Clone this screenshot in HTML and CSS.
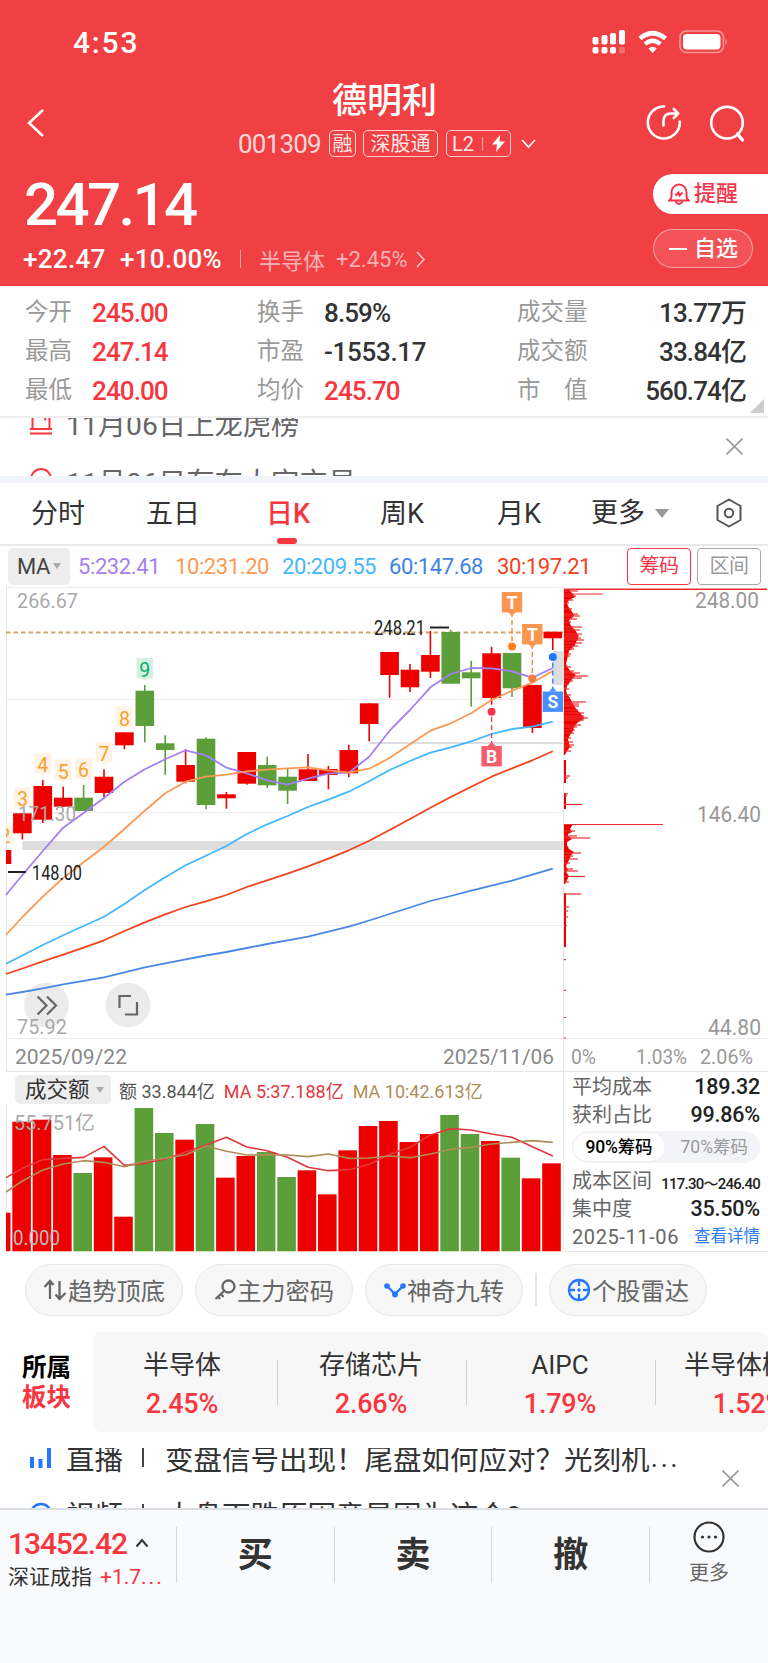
FILE: index.html
```html
<!DOCTYPE html>
<html lang="zh-CN">
<head>
  <meta charset="UTF-8" />
  <meta name="viewport" content="width=device-width, initial-scale=1.0"/>
  <title>德明利 001309</title>
  <link rel="stylesheet" href="styles.css">
</head>
<body>
  <header class="top">
    <div class="status">
      <span class="time">4:53</span>
      <svg width="134" height="26" viewBox="592 29 134 26" fill="#fff">
        <rect x="592.5" y="37" width="6" height="7.5" rx="2"/>
        <rect x="601.5" y="35" width="6" height="9.500" rx="2"/>
        <rect x="610" y="33" width="6" height="11.500" rx="2"/>
        <rect x="619" y="30" width="6" height="14.500" rx="2"/>
        <rect x="592.5" y="47" width="6" height="6.500" rx="2"/>
        <rect x="601.5" y="47" width="6" height="6.500" rx="2"/>
        <rect x="610" y="47" width="6" height="6.500" rx="2"/>
        <rect x="619" y="47" width="6" height="6.500" rx="2" opacity=".25"/>
        <path d="M640 38.500Q652.500 28 665.500 38.500" fill="none" stroke="#fff" stroke-width="4.600"/>
        <path d="M645 44Q652.500 37.500 660.500 44" fill="none" stroke="#fff" stroke-width="4.200"/>
        <path d="M648.500 48.500Q652.500 45.200 656.800 48.500L652.600 53Z"/>
        <rect x="680" y="31" width="43.500" height="21.500" rx="6.500" fill="none" stroke="#fff" stroke-opacity=".45" stroke-width="1.600"/>
        <rect x="683" y="34" width="37.500" height="15.500" rx="4"/>
        <path d="M725.500 38.500q2.500 3 0 7z" opacity=".5"/>
      </svg>
    </div>
    <div class="title-bar">
      <svg class="back" width="20" height="32" viewBox="0 0 20 32"><path d="M17 3L3 16L17 29"/></svg>
      <div class="title">
        <h1>德明利</h1>
        <div class="tags">
          <span class="code">001309</span>
          <span class="tag">融</span>
          <span class="tag wide">深股通</span>
          <span class="tag l2">L2<i></i><svg width="13" height="17" viewBox="0 0 13 17"><path d="M8 0L0 9.500H5L4 17L13 6.500H7.500Z" fill="#fff"/></svg></span>
          <svg class="down" width="15" height="10" viewBox="0 0 15 10"><path d="M1 1L7.500 8L14 1"/></svg>
        </div>
      </div>
      <svg class="tools" width="102" height="40" viewBox="645 103 102 40">
        <path d="M664 106.500A16 16 0 1 0 679.800 121.500"/>
        <path d="M663.500 125.500V121q0-7.500 7.500-7.500H676M673.800 109L678.200 113.500L673.800 118"/>
        <circle cx="727" cy="122.700" r="15.800"/>
        <path d="M737.500 134L742.500 140" stroke-width="3.400"/>
      </svg>
    </div>
    <div class="quote">
      <div class="quote-left">
        <div class="price">247.14</div>
        <div class="change">
          <b>+22.47</b><b>+10.00%</b><i></i><span>半导体</span><span class="pct">+2.45%</span>
          <svg width="9" height="17" viewBox="0 0 9 17"><path d="M1 1L8 8.500L1 16"/></svg>
        </div>
      </div>
      <div class="quote-right">
        <button class="remind">
          <svg width="22" height="23" viewBox="0 0 22 23"><path d="M1.200 17.500H20.800Q18.500 16 18.500 13V9.500A7.500 8 0 0 0 3.500 9.500V13Q3.500 16 1.200 17.500ZM7.500 18.500Q11 23.500 14.500 18.500M7.500 12.500L10.500 9.500L11.500 12.500L14.500 9.500"/></svg>提醒
        </button>
        <button class="fav"><i></i>自选</button>
      </div>
    </div>
  </header>

  <section class="stats">
    <span>今开</span><b class="red">245.00</b><span>换手</span><b>8.59%</b><span>成交量</span><b class="r">13.77万</b>
    <span>最高</span><b class="red">247.14</b><span>市盈</span><b class="pe">-1553.17</b><span>成交额</span><b class="r">33.84亿</b>
    <span>最低</span><b class="red">240.00</b><span>均价</span><b class="red">245.70</b><span>市　值</span><b class="r">560.74亿</b>
    <i class="corner"></i>
  </section>

  <section class="news">
    <div class="news-list">
      <p><svg width="24" height="26" viewBox="0 0 24 26"><path d="M3.500 20V11A8.500 9 0 0 1 20.500 11V20M1 20H23M1 24.500H23M13 6.500q3.500 1 3.500 5"/></svg>11月06日上龙虎榜</p>
      <p><svg width="24" height="26" viewBox="0 0 24 26"><circle cx="12" cy="12" r="10"/></svg>11月06日存在大宗交易</p>
    </div>
    <svg class="close" width="17" height="17" viewBox="0 0 17 17"><path d="M.5.5L16.500 16.500M16.500.5L.5 16.500"/></svg>
  </section>

  <nav class="tabs">
    <span>分时</span><span>五日</span><span class="on">日K</span><span>周K</span><span>月K</span>
    <span class="more">更多<i></i></span>
    <svg width="28" height="30" viewBox="0 0 28 30"><path d="M14 1.500L25.500 8V22L14 28.500L2.500 22V8Z"/><circle cx="14" cy="15" r="4.200"/></svg>
  </nav>

  <div class="ma-row">
    <span class="drop">MA<i></i></span>
    <span style="color:#a47ff0">5:232.41</span>
    <span style="color:#fb9a52">10:231.20</span>
    <span style="color:#43b7fb">20:209.55</span>
    <span style="color:#3f82e6">60:147.68</span>
    <span style="color:#f2421d">30:197.21</span>
    <em class="box on">筹码</em>
    <em class="box">区间</em>
  </div>

  <svg id="kline" width="768" height="485" viewBox="0 587 768 485"></svg>

  <section class="lower">
    <div class="volume">
      <div class="vol-head">
        <span class="drop">成交额<i></i></span>
        <span>额 33.844亿</span>
        <span class="m5">MA 5:37.188亿</span>
        <span class="m10">MA 10:42.613亿</span>
      </div>
      <svg id="vol" width="563" height="148" viewBox="0 1104 563 148"></svg>
    </div>
    <div class="chip">
      <div><span>平均成本</span><b>189.32</b></div>
      <div><span>获利占比</span><b>99.86%</b></div>
      <div class="switch"><b>90%筹码</b><span>70%筹码</span></div>
      <div><span>成本区间</span><b class="small">117.30～246.40</b></div>
      <div><span>集中度</span><b>35.50%</b></div>
      <div><span class="date">2025-11-06</span><a>查看详情</a></div>
    </div>
  </section>

  <div class="pills">
    <span><svg width="24" height="22" viewBox="0 0 24 22"><path d="M7 20V2M1.500 8L7 2L10.500 6M16.500 2V20M12.500 15.500L16.500 20L22.500 14"/></svg>趋势顶底</span>
    <span><svg width="22" height="22" viewBox="0 0 22 22"><circle cx="14.500" cy="7.500" r="6"/><path d="M10 12L1.500 20M7 15L9.500 18M4 17.500L6 20"/></svg>主力密码</span>
    <span><svg class="blue" width="22" height="22" viewBox="0 0 22 22"><path d="M3 7L11 15L19 7"/><g fill="#2677ff" stroke="none"><circle cx="3" cy="7" r="2.800"/><circle cx="11" cy="15.500" r="2.900"/><circle cx="19" cy="7" r="2.800"/></g></svg>神奇九转</span>
    <i></i>
    <span><svg class="blue" width="24" height="24" viewBox="0 0 24 24"><circle cx="12" cy="12" r="10"/><path d="M12 2V8M12 16V22M2 12H8M16 12H22"/><circle cx="12" cy="12" r="1.800" fill="#2677ff" stroke="none"/></svg>个股雷达</span>
  </div>

  <section class="sector">
    <div class="label">所属<br><em>板块</em></div>
    <div class="cells">
      <div>半导体<b>2.45%</b></div>
      <div>存储芯片<b>2.66%</b></div>
      <div>AIPC<b>1.79%</b></div>
      <div>半导体概念<b>1.52%</b></div>
    </div>
  </section>

  <section class="live">
    <div class="live-list">
      <p><svg width="24" height="22" viewBox="0 0 24 22"><path d="M3 9V20M11.500 11V20M20 0V20"/></svg><span>直播</span><i></i>变盘信号出现！尾盘如何应对？光刻机<em>...</em></p>
      <p><svg width="24" height="26" viewBox="0 0 24 26"><circle cx="12" cy="12" r="10"/></svg><span>视频</span><i></i>大盘下跌原因竟是因为这个?</p>
    </div>
    <svg class="close" width="17" height="17" viewBox="0 0 17 17"><path d="M.5.5L16.500 16.500M16.500.5L.5 16.500"/></svg>
  </section>

  <footer class="trade">
    <div class="index">
      <div class="num">13452.42<svg width="14" height="10" viewBox="0 0 14 10"><path d="M1.500 8.500L7 2L12.500 8.500"/></svg></div>
      <div class="name">深证成指<em>+1.7<i>...</i></em></div>
    </div>
    <b>买</b><b>卖</b><b>撤</b>
    <div class="etc">
      <svg width="34" height="34" viewBox="0 0 34 34"><circle cx="17" cy="17" r="14.500"/><g fill="#333" stroke="none"><circle cx="10.500" cy="17" r="1.600"/><circle cx="17" cy="17" r="1.600"/><circle cx="23.500" cy="17" r="1.600"/></g></svg>
      更多
    </div>
  </footer>

  <script src="chart.js"></script>
</body>
</html>
```

FILE: styles.css
```css
* {
  box-sizing: border-box;
}
body {
  margin: 0;
  width: 768px;
  height: 1663px;
  overflow: hidden;
  background: #fff;
  color: #333;
  font-family: Roboto, "Noto Sans CJK SC", sans-serif;
}
svg {
  display: block;
  flex: none;
}
b {
  font-weight: 500;
}
em, i {
  font-style: normal;
}
p, h1 {
  margin: 0;
}

/* header */
.top {
  height: 286px;
  background: #f04043;
  color: #fff;
}
.status {
  display: flex;
  height: 76px;
  padding: 29px 42px 0 73px;
  justify-content: space-between;
}
.time {
  font-size: 30px;
  font-weight: 500;
  line-height: 28px;
  letter-spacing: 1.8px;
}
.status svg {
  overflow: visible;
}
.title-bar {
  display: flex;
  height: 90px;
}
.back {
  margin: 31px 0 0 26px;
  fill: none;
  stroke: #fff;
  stroke-width: 2.6;
}
.title {
  width: 480px;
  margin-left: 105px;
}
.title h1 {
  padding: 1px 0 0 181px;
  font-size: 35px;
  font-weight: 500;
  line-height: 50px;
}
.tags {
  display: flex;
  align-items: center;
  margin-top: 3px;
  padding-left: 87px;
  height: 27px;
}
.code {
  width: 91px;
  font-size: 26px;
  letter-spacing: -.8px;
  color: rgba(255, 255, 255, .8);
}
.tag {
  display: flex;
  align-items: center;
  justify-content: center;
  width: 27px;
  height: 27px;
  margin-right: 7px;
  border: 1.5px solid rgba(255, 255, 255, .75);
  border-radius: 5px;
  font-size: 20px;
  line-height: 24px;
  color: rgba(255, 255, 255, .9);
}
.tag.wide {
  width: 75px;
  margin-right: 8px;
}
.tag.l2 {
  width: 65px;
  margin-right: 10px;
}
.tag.l2 i {
  width: 1px;
  height: 14px;
  margin: 0 9px 0 8px;
  background: rgba(255, 255, 255, .6);
}
.down {
  fill: none;
  stroke: #fff;
  stroke-width: 1.6;
}
.tools {
  margin: 27px 0 0 14px;
  fill: none;
  stroke: #fff;
  stroke-width: 2.6;
  stroke-linecap: round;
  stroke-linejoin: round;
}
.quote {
  display: flex;
  justify-content: space-between;
}
.price {
  padding-left: 24px;
  margin-top: 7px;
  font-size: 60px;
  font-weight: 500;
  letter-spacing: -2.6px;
  line-height: 64px;
}
.change {
  display: flex;
  align-items: center;
  height: 44px;
  padding-left: 23px;
  font-size: 26px;
}
.change b {
  width: 97px;
  letter-spacing: .3px;
}
.change b + b {
  width: 119px;
}
.change i {
  width: 1px;
  height: 18px;
  margin: 0 18px 0 1px;
  background: rgba(255, 255, 255, .5);
}
.change span {
  width: 77px;
  font-size: 22px;
  color: rgba(255, 255, 255, .6);
}
.change .pct {
  width: 80px;
}
.change svg {
  fill: none;
  stroke: rgba(255, 255, 255, .7);
  stroke-width: 1.5;
}
.quote-right {
  width: 115px;
  padding-top: 8px;
}
.remind, .fav {
  display: flex;
  align-items: center;
  border: 0;
  padding: 0 0 0 15px;
  font: 500 22px/32px Roboto, "Noto Sans CJK SC", sans-serif;
}
.remind {
  width: 115px;
  height: 40px;
  border-radius: 20px 0 0 20px;
  background: #fff;
  color: #f5354a;
}
.remind svg {
  margin-right: 4px;
  fill: none;
  stroke: #f5354a;
  stroke-width: 2;
}
.fav {
  width: 100px;
  height: 39px;
  margin-top: 15px;
  border: 1.5px solid rgba(255, 255, 255, .45);
  border-radius: 20px;
  background: rgba(255, 255, 255, .1);
  color: #fff;
}
.fav i {
  width: 18px;
  height: 2px;
  margin-right: 7px;
  background: #fff;
}

/* stats */
.stats {
  position: relative;
  display: grid;
  grid-template-columns: 67px 165px 67px 193px 78px 151px;
  grid-auto-rows: 39px;
  height: 132px;
  padding: 8px 0 0 25px;
  border-bottom: 2px solid #eee;
  line-height: 39px;
}
.stats span {
  font-size: 23.5px;
  line-height: 36px;
  color: #999;
}
.stats b {
  font-size: 26px;
  letter-spacing: -.9px;
}
.stats .pe {
  letter-spacing: -.3px;
}
.stats .r {
  text-align: right;
}
.red {
  color: #f8363f;
}
.corner {
  position: absolute;
  right: 4px;
  bottom: 3px;
  border-left: 14px solid transparent;
  border-bottom: 14px solid #ccc;
}

/* news */
.news {
  display: flex;
  height: 65px;
  border-bottom: 7px solid #f1f4fa;
}
.news-list {
  flex: 1;
  height: 58px;
  overflow: hidden;
}
.news p {
  display: flex;
  align-items: center;
  height: 58px;
  margin-top: -25px;
  padding-left: 29px;
  font-size: 28.3px;
  color: #666;
}
.news p + p {
  margin-top: 0;
}
.news p svg {
  margin-right: 13px;
  fill: none;
  stroke: #f8363f;
  stroke-width: 2;
}
.close {
  margin: 20px 25px 0 0;
  stroke: #999;
  stroke-width: 1.6;
}

/* tabs */
.tabs {
  display: flex;
  height: 63px;
  padding-left: 31px;
  border-bottom: 2px solid #e9e9e9;
  font-size: 27px;
  line-height: 63px;
  color: #333;
}
.tabs span {
  width: 115px;
}
.tabs span.on {
  position: relative;
  width: 113px;
  padding-left: 5px;
  font-weight: 500;
  color: #f8363f;
}
.tabs span.on + span {
  width: 117px;
  padding-left: 6px;
}
.tabs span:nth-child(5) {
  width: 100px;
  padding-left: 6px;
}
.on::after {
  content: "";
  position: absolute;
  left: 16px;
  bottom: 0;
  width: 20px;
  height: 6px;
  border-radius: 3px;
  background: #f8363f;
}
.tabs .more {
  display: flex;
  align-items: center;
  width: 124px;
}
.more i {
  margin-left: 10px;
  border: 7px solid transparent;
  border-top: 9px solid #999;
  border-bottom: 0;
}
.tabs svg {
  margin-top: 15px;
  fill: none;
  stroke: #555;
  stroke-width: 2;
  stroke-linejoin: round;
}
.ma-row {
  display: flex;
  align-items: center;
  height: 41px;
  padding: 0 7px 1px 8px;
  font-size: 22px;
  letter-spacing: -.4px;
}
.ma-row > span {
  width: 104px;
}
.ma-row > span:nth-child(2) {
  width: 97px;
}
.ma-row > span:nth-child(4),
.ma-row > span:nth-child(3) {
  width: 107px;
}
.ma-row > span:nth-child(5) {
  width: 108px;
}
.drop {
  display: flex;
  align-items: center;
  background: #ededed;
  border-radius: 5px;
  color: #444;
}
.ma-row > .drop {
  width: 62px;
  height: 37px;
  padding-left: 9px;
  margin-right: 8px;
  font-size: 22px;
}
.drop i {
  margin-left: 3px;
  border: 4.5px solid transparent;
  border-top: 6px solid #aaa;
  border-bottom: 0;
}
.box {
  width: 64px;
  height: 37px;
  border: 1.5px solid #aaa;
  border-radius: 4px;
  text-align: center;
  font-size: 20px;
  line-height: 35px;
  color: #999;
}
.ma-row .box.on {
  margin: 0 6px 0 auto;
  border-color: #f5354a;
  color: #f5354a;
}
.box.on::after {
  content: none;
}

/* volume and chip distribution */
.lower {
  display: grid;
  grid-template-columns: 564px 204px;
  height: 180px;
}
.volume {
  border-right: 1px solid #e8e8e8;
}
.vol-head {
  display: flex;
  align-items: center;
  height: 32px;
  padding: 3px 0 0 15px;
  font-size: 18px;
  white-space: nowrap;
  color: #555;
}
.vol-head .drop {
  width: 96px;
  height: 29px;
  margin-right: 8px;
  padding-left: 10px;
  font-size: 21.5px;
  line-height: 29px;
  color: #333;
}
.vol-head .drop i {
  margin-left: 6px;
}
.vol-head .m5 {
  margin-left: 9px;
  color: #e2373d;
}
.vol-head .m10 {
  margin-left: 9px;
  color: #b08d57;
}
.chip {
  padding: 1px 8px 0 8px;
  border-bottom: 1px solid #e8e8e8;
  white-space: nowrap;
}
.chip div {
  display: flex;
  align-items: center;
  justify-content: space-between;
  height: 28px;
  font-size: 20px;
  line-height: 28px;
  color: #666;
}
.chip b {
  font-size: 21.5px;
  letter-spacing: -.2px;
  color: #222;
}
.chip .small {
  padding-top: 6px;
  font-size: 15px;
  letter-spacing: -.75px;
}
.chip .switch {
  height: 32px;
  margin: 2px 0 4px;
  border-radius: 16px;
  background: #f2f4f8;
}
.switch b {
  width: 94px;
  border: 1px solid #eceef2;
  border-radius: 16px;
  background: #fff;
  text-align: center;
  font-size: 17.5px;
  color: #000;
}
.switch span {
  padding-right: 12px;
  font-size: 17.5px;
  color: #999;
}
.chip a {
  font-size: 16.5px;
  color: #2b7bf8;
}
.chip .date {
  font-size: 20px;
  letter-spacing: .6px;
}

/* shortcut pills */
.pills {
  display: flex;
  align-items: center;
  height: 74px;
  padding: 1px 0 0 25px;
}
.pills span {
  display: flex;
  align-items: center;
  justify-content: center;
  width: 158px;
  height: 52px;
  margin-right: 12px;
  border: 1.5px solid #e8e8e8;
  border-radius: 26px;
  background: #f7f7f7;
  font-size: 24.3px;
  color: #666;
}
.pills svg {
  margin-right: 1px;
  fill: none;
  stroke: #666;
  stroke-width: 2.3;
}
.pills svg.blue {
  stroke: #2677ff;
}
.pills > i {
  width: 2px;
  height: 33px;
  margin: 0 12px 0 0;
  background: #e6e6e6;
}

/* sectors */
.sector {
  display: flex;
  height: 106px;
  margin-top: 6px;
}
.label {
  width: 93px;
  padding: 21px 0 0 22px;
  font-size: 24.5px;
  font-weight: 700;
  line-height: 30px;
  color: #000;
}
.label em {
  color: #f8363f;
}
.cells {
  display: flex;
  width: 675px;
  height: 100px;
  overflow: hidden;
  border-radius: 8px;
  background: #f7f7f7;
}
.cells div {
  flex: none;
  position: relative;
  width: 189px;
  padding: 15px 11px 0 0;
  text-align: center;
  font-size: 26px;
  line-height: 36px;
  white-space: nowrap;
}
.cells div:not(:last-child)::after {
  content: "";
  position: absolute;
  right: 4px;
  top: 28px;
  width: 1.5px;
  height: 45px;
  background: #d0d0d0;
}
.cells b {
  display: block;
  margin-top: 3px;
  font-size: 27px;
  letter-spacing: -.2px;
  color: #f8363f;
}

/* live feed */
.live {
  display: flex;
  height: 70px;
  padding-top: 10px;
}
.live-list {
  flex: 1;
  height: 60px;
  overflow: hidden;
}
.live p {
  display: flex;
  align-items: center;
  height: 56px;
  margin-top: -19px;
  padding-left: 29px;
  font-size: 28.5px;
  white-space: nowrap;
}
.live p + p {
  margin-top: 0;
}
.live p span {
  margin-left: 13px;
}
.live p i {
  width: 2px;
  height: 19px;
  margin: 0 21px 0 19px;
  background: #444;
}
.live p em {
  margin-left: 1px;
  letter-spacing: 2.4px;
}
.live p svg {
  margin-top: 3px;
  fill: none;
  stroke: #2677ff;
  stroke-width: 4;
}
.live p + p svg {
  stroke-width: 2.5;
}
.live .close {
  margin: 22px 29px 0 0;
}

/* trade bar */
.trade {
  display: flex;
  height: 155px;
  border-top: 2px solid #dcdfe3;
  background: #f9fafc;
}
.index {
  width: 176px;
  padding: 15px 0 0 8px;
}
.num {
  display: flex;
  align-items: center;
  height: 36px;
  font-size: 30px;
  font-weight: 500;
  letter-spacing: -1.1px;
  color: #f8363f;
}
.num svg {
  margin-left: 8px;
  fill: none;
  stroke: #333;
  stroke-width: 2;
}
.name {
  font-size: 21px;
  line-height: 32px;
}
.name em {
  margin-left: 8px;
  color: #f8363f;
}
.name i {
  letter-spacing: 2px;
}
.trade > b {
  width: 158px;
  height: 56px;
  margin-top: 17px;
  border-left: 1.5px solid #d5d7da;
  text-align: center;
  font-size: 35px;
  font-weight: 700;
  line-height: 58px;
}
.etc {
  width: 119px;
  height: 56px;
  margin-top: 17px;
  border-left: 1.5px solid #d5d7da;
  text-align: center;
  font-size: 20px;
  line-height: 28px;
  color: #666;
}
.etc svg {
  margin: -7px auto 5px;
  fill: none;
  stroke: #333;
  stroke-width: 2.2;
}
```

FILE: chart.js
```js
const RED = '#ec0000';
const GREEN = '#5c9e3a';
const STEP = 20.4;
const X0 = 22.4;

// [color, body top, body bottom, wick top, wick bottom]
const candles = [
  ['r', 813.3, 833.3, 813.3, 839.5], ['r', 786, 819.7, 780, 823], ['r', 797.7, 806.7, 786.7, 806.7],
  ['g', 797.7, 811, 785, 811], ['r', 776.7, 793, 769.3, 797], ['r', 732.3, 745.3, 732.3, 749.3],
  ['g', 690.7, 726, 685, 742.3], ['g', 743.3, 750, 735.3, 774.7], ['r', 765, 781.7, 749.3, 783.3],
  ['g', 738.7, 805, 737.3, 809.3], ['r', 794.3, 798.3, 792, 808.7], ['r', 752, 783.7, 752, 784.7],
  ['g', 765, 785.3, 756.7, 788], ['g', 776.7, 790.7, 768.3, 804], ['r', 769.3, 781, 754, 781],
  ['r', 769, 775, 766, 789.3], ['r', 750, 773.3, 744.7, 777.3], ['r', 703.3, 724, 703.3, 741.3],
  ['r', 652, 675, 652, 697.7], ['r', 669.7, 687.3, 664, 692], ['r', 655, 671.7, 631, 678],
  ['g', 632, 683.7, 630, 683.7], ['g', 672.3, 678.3, 661, 706.7], ['r', 653.3, 698, 646.7, 704.7],
  ['g', 653, 688.3, 653, 697], ['r', 685, 728, 685, 733], ['r', 631.7, 638.3, 631.7, 650]
];

// first value sits on the left edge of the plot, the rest on candle centres
const lines = {
  '#a47ff0': [895, 875, 851, 827.7, 813, 798, 781.7, 769.3, 759.3, 750.3, 755.3, 767.7, 773.3, 780.3, 784.7, 778.7, 773.7, 772.7, 756.7, 730.7, 710, 687.3, 674, 668, 668.3, 671.3, 677.7, 668],
  '#fb9a52': [935, 917, 896.7, 878, 862.3, 846.7, 829, 810.7, 793.3, 781.7, 776.7, 774.7, 771.3, 769.7, 768.3, 767.3, 770.3, 772.7, 768.7, 758, 744.3, 730.7, 723.3, 713.3, 700, 690.7, 682.7, 671],
  '#43b7fb': [963.7, 955.5, 945, 935.3, 926, 916.7, 904, 890, 877.3, 865.3, 855.7, 846, 834, 824.3, 816, 807, 799.7, 791.7, 781.3, 770, 761, 752.7, 747.3, 741.3, 734, 729, 726.7, 721.7],
  '#f2421d': [974, 968.5, 961.3, 954.7, 947.7, 940.3, 931, 922.3, 914.3, 907, 901.3, 895, 887, 880.3, 873.7, 866.3, 858.7, 850.3, 840.7, 830, 819, 807.7, 797, 786.7, 776.7, 768.3, 760.3, 751.3],
  '#4a86e6': [994.7, 992, 988.3, 984.3, 980.8, 977.3, 972.3, 967.3, 963.3, 959.3, 955.5, 952, 948, 944, 940.3, 936.7, 931.7, 926.7, 920.5, 914, 907.5, 901, 896, 890.7, 885.7, 880.7, 874.7, 868.7]
};

const cx = i => X0 + STEP * i;
const rect = (x, y, w, h, c) => `<rect x="${x}" y="${y}" width="${w}" height="${h}" fill="${c}"/>`;
const hline = (x1, x2, y, c, w = 1) => `<path d="M${x1} ${y}H${x2}" stroke="${c}" stroke-width="${w}"/>`;
const label = (t, x, y, w, size, c, weight = 400) =>
  `<text x="${x}" y="${y}" font-size="${size}" fill="${c}" font-weight="${weight}" textLength="${w}" lengthAdjust="spacingAndGlyphs">${t}</text>`;
const poly = (v, c, w, f = y => y) =>
  `<polyline fill="none" stroke="${c}" stroke-width="${w}" stroke-linejoin="round" points="${v.map((y, i) => (i ? cx(i - 1) : 6) + ',' + f(y)).join(' ')}"/>`;

let s = '';
[587.5, 699.5, 812.5, 925.5, 1038.5].forEach(y => s += hline(6, 563, y, '#ececec'));
s += hline(563, 768, 1038.5, '#ececec') + hline(6, 768, 1071.5, '#e8e8e8', 1.5);
s += '<path d="M6.500 587V1072M563.500 587V1072" stroke="#e4e4e4"/>';
s += '<path d="M6 632.500H563" stroke="#d3a668" stroke-width="1.800" stroke-dasharray="4.500 3"/>';
s += rect(22.5, 841, 540.5, 9, '#ddd') + hline(369, 563, 743, '#ddd', 2) + rect(553, 651, 10, 34, '#ddd');

// nine-turn counters
[['3', 0, 787], ['4', 1, 753], ['5', 2, 759.5], ['6', 3, 758], ['7', 4, 742], ['8', 5, 706.5], ['9', 6, 658]].forEach(([t, i, y]) => {
  const g = t === '9';
  const bg = g ? '#d3f0e3' : '#fff3e6';
  s += rect(cx(i) - 8.2, y, 16.4, 20.5, bg);
  s += `<path d="M${cx(i) - 3} ${y + 20}h6l-3 3z" fill="${bg}"/>`;
  s += `<text x="${cx(i)}" y="${y + 19}" text-anchor="middle" font-size="19.500" fill="${g ? '#0fae68' : '#f9a12e'}">${t}</text>`;
});
s += '<svg x="6" y="823" width="9" height="22"><rect width="8" height="21" fill="#fff3e6"/><text x="-6.500" y="20" font-size="19.500" fill="#f9a12e">2</text></svg>';

s += rect(6, 850, 5.3, 14, RED);
candles.forEach(([c, t, b, h, l], i) => {
  const f = c === 'r' ? RED : GREEN;
  s += rect(cx(i) - 0.8, h, 1.6, l - h, f) + rect(cx(i) - 9.3, t, 18.6, b - t, f);
});
s += '<circle cx="46.500" cy="1005" r="22.300" fill="#ebebeb"/><circle cx="128" cy="1005" r="22.300" fill="#ebebeb"/>';
for (const c in lines) s += poly(lines[c], c, 1.8);
s += '<path d="M37.500 996.500L46.500 1005.500L37.500 1014.500M47 996.500L56 1005.500L47 1014.500M131 996H119.500V1008M137 1002V1014.500H125" fill="none" stroke="#666" stroke-width="2.200"/>';

s += label('266.67', 17, 607.5, 61, 21, '#aaa') + label('171.30', 18, 821, 58, 21, '#aaa');
s += label('75.92', 17, 1034, 50, 21, '#aaa');
s += label('248.21', 374, 635, 51, 19.5, '#222') + hline(430, 449, 627.5, '#222', 2);
s += label('148.00', 32, 880, 50, 19.5, '#222') + hline(8, 26, 872, '#222', 2);
s += label('248.00', 695, 608, 64, 22, '#999') + label('146.40', 697, 822, 64, 22, '#999') + label('44.80', 708, 1035, 53, 22, '#999');
s += label('2025/09/22', 15, 1064, 112, 20, '#888') + label('2025/11/06', 443, 1064, 111, 20, '#888');
s += label('0%', 571, 1064, 25, 20, '#999') + label('1.03%', 636, 1064, 51, 20, '#999') + label('2.06%', 700, 1064, 53, 20, '#999');

// trade markers: letter, x, box top, dot y, colours
[['T', 512, 592, 646.5, '#fb9650', '#ff7f1f'], ['T', 532.3, 624, 678.5, '#fb9650', '#f47a35'],
 ['S', 552.8, 691.5, 657, '#4a8fff', '#2277ff'], ['B', 491.6, 746, 711.7, '#f75c6c', '#f5354a']].forEach(([t, x, y, d, bg, dot]) => {
  const down = d > y;
  const e = down ? y + 20 : y;
  s += `<path d="M${x} ${e}V${d}" stroke="${dot}" stroke-width="1.300" stroke-dasharray="5 3"/>`;
  s += rect(x - 10.2, y, 20.4, 20.4, bg);
  s += `<path d="M${x - 4} ${e}h8l-4 ${down ? 4 : -4}z" fill="${bg}"/>`;
  s += `<circle cx="${x}" cy="${d}" r="4" fill="${dot}"/>`;
  s += `<text x="${x}" y="${y + 16.5}" text-anchor="middle" font-size="17.500" font-weight="700" fill="#fff">${t}</text>`;
});

// chip distribution: solid envelope plus single-price spikes, as [y, width]
const envelopes = [
  [[589, 5], [592, 7], [594, 9], [597, 11], [600, 5], [603, 3], [606, 4], [609, 6], [612, 8], [615, 10], [617, 9], [620, 5], [624, 6], [627, 8], [630, 11], [633, 13], [636, 14], [639, 14], [642, 12], [645, 11], [648, 8], [651, 5], [655, 4], [660, 3], [664, 2], [668, 4], [672, 7], [675, 12], [678, 9], [682, 6], [686, 3], [690, 2], [694, 3], [698, 6], [702, 8], [706, 10], [710, 13], [714, 17], [718, 20], [720, 18], [723, 13], [727, 10], [731, 9], [735, 6], [739, 4], [743, 5], [747, 6], [751, 3], [755, 1]],
  [[760, 2], [783, 2]],
  [[793, 2], [809, 2]],
  [[824, 9], [829, 6], [832, 8], [834, 4], [836, 4], [839, 8], [842, 3], [845, 3], [849, 5], [852, 10], [855, 7], [858, 6], [862, 4], [866, 2], [870, 4], [872, 2], [876, 5], [880, 3], [884, 1]],
  [[893, 2], [947, 2]]
];
const spikes = [[591, 14], [594, 39], [596, 12], [600, 9], [603, 5], [609, 8], [614, 14], [616, 16], [619, 13], [622, 7], [627, 18], [630, 16], [634, 18], [636, 15], [638, 17], [640, 20], [643, 18], [646, 14], [649, 10], [654, 7], [656, 6], [667, 7], [671, 10], [673, 16], [676, 24], [678, 18], [681, 9], [684, 5], [689, 5], [695, 7], [698, 6], [702, 22], [704, 15], [706, 15], [710, 14], [713, 20], [716, 20], [718, 24], [720, 20], [725, 17], [727, 13], [730, 11], [733, 10], [738, 7], [742, 9], [745, 10], [747, 8], [751, 7], [776, 6], [778, 4], [794, 4], [796, 3], [804.5, 18], [824.5, 99], [831, 11], [836, 13], [838, 26], [853, 17], [856, 9], [859, 14], [863, 6], [869, 9], [871, 14], [876.5, 21], [882, 5], [894, 17], [907, 5], [911, 4], [917, 4], [925.5, 3], [959.7, 2], [990.3, 2], [1017.5, 2], [1038, 2]];
envelopes.forEach(e => {
  s += `<path fill="${RED}" d="M564 ${e[0][0]}${e.map(p => `L${564 + p[1]} ${p[0]}`).join('')}L564 ${e[e.length - 1][0]}Z"/>`;
});
s += hline(564, 767, 589.3, '#f02d2d', 1.5);
spikes.forEach(([y, w]) => s += hline(564, 564 + w, y, '#f02d2d', 1.2));
document.getElementById('kline').innerHTML = s;

// turnover bars, values are offsets from 1060 at triple scale
const f = v => 1060 + v / 3;
const vols = [185, 179, 285, 339, 292, 470, 144, 219, 239, 192, 353, 288, 276, 351, 331, 403, 271, 198, 183, 246, 222, 165, 222, 243, 293, 355, 310];
const greens = [3, 6, 7, 9, 12, 13, 21, 22, 24];
const vma5 = [353, 325, 299, 295, 292, 259, 316, 310, 297, 276, 255, 232, 261, 272, 292, 322, 332, 329, 313, 283, 262, 225, 206, 210, 222, 232, 260, 288];
const vma10 = [396, 363, 330, 312, 302, 307, 320, 304, 295, 284, 258, 274, 285, 284, 285, 290, 282, 295, 294, 288, 293, 282, 268, 262, 252, 247, 242, 247];
let v = '<path d="M6.500 1104V1251" stroke="#e4e4e4"/>' + rect(6, 1212.7, 4.5, 38.5, RED);
vols.forEach((t, i) => v += rect(12.3 + 20.38 * i, f(t), 18.6, 1251.3 - f(t), greens.includes(i) ? GREEN : RED));
v += poly(vma5, '#e2373d', 1.6, f) + poly(vma10, '#b08d57', 1.6, f);
v += label('55.751亿', 14, 1130, 81, 20, '#aaa') + label('0.000', 13, 1244.5, 47, 20, '#bbb');
document.getElementById('vol').innerHTML = v;
```
